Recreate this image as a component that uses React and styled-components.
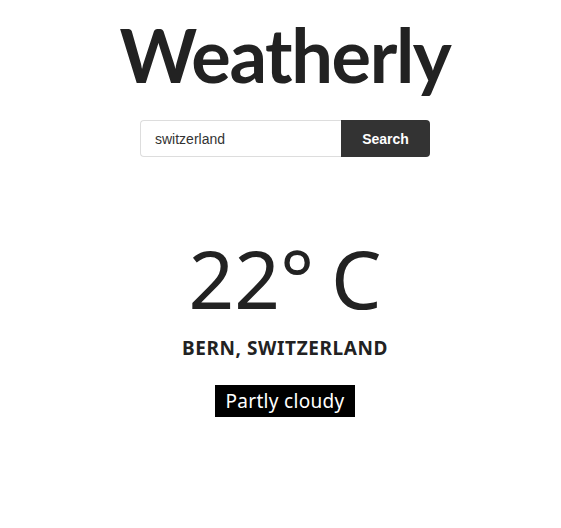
import React from "react";
import styled, { createGlobalStyle } from "styled-components";

const GlobalStyle = createGlobalStyle`
  body {
    margin: 0;
    background: #fff;
    font-family: "Noto Sans", "Open Sans", sans-serif;
    color: #222;
  }
`;

export default function App() {
  return (
    <>
      <GlobalStyle />
      <Page>
        <Title>Weatherly</Title>
        <SearchForm onSubmit={(e) => e.preventDefault()}>
          <SearchInput defaultValue="switzerland" />
          <SearchButton type="submit">Search</SearchButton>
        </SearchForm>
        <Temperature>22° C</Temperature>
        <Location>BERN, SWITZERLAND</Location>
        <Condition>Partly cloudy</Condition>
      </Page>
    </>
  );
}

const Page = styled.main`
  display: flex;
  flex-direction: column;
  align-items: center;
  padding-top: 10px;
  padding-left: 9px;
`;

const Title = styled.h1`
  margin: 0;
  font-family: Lato, "Noto Sans", sans-serif;
  font-size: 74px;
  font-weight: 700;
  line-height: 90px;
  letter-spacing: -1.4px;
  color: #222;
`;

const SearchForm = styled.form`
  display: flex;
  margin-top: 20px;
`;

const SearchInput = styled.input`
  box-sizing: border-box;
  width: 201px;
  height: 37px;
  padding: 0 14px;
  border: 1px solid #ddd;
  border-right: none;
  border-radius: 4px 0 0 4px;
  font-family: "Liberation Sans", Arial, sans-serif;
  font-size: 14px;
  color: #333;
  outline: none;
`;

const SearchButton = styled.button`
  box-sizing: border-box;
  width: 89px;
  height: 37px;
  border: none;
  border-radius: 0 4px 4px 0;
  background: #333;
  color: #fff;
  font-family: "Liberation Sans", Arial, sans-serif;
  font-size: 14px;
  font-weight: 700;
`;

const Temperature = styled.div`
  margin-top: 71px;
  font-size: 80px;
  line-height: 100px;
  letter-spacing: 0;
  word-spacing: -4px;
  color: #222;
`;

const Location = styled.div`
  margin-top: 7px;
  font-size: 19px;
  font-weight: 700;
  letter-spacing: 0.6px;
  color: #222;
`;

const Condition = styled.div`
  margin-top: 24px;
  padding: 0 11px;
  height: 32px;
  line-height: 32px;
  background: #000;
  color: #fff;
  font-size: 19px;
  letter-spacing: 0.3px;
`;
